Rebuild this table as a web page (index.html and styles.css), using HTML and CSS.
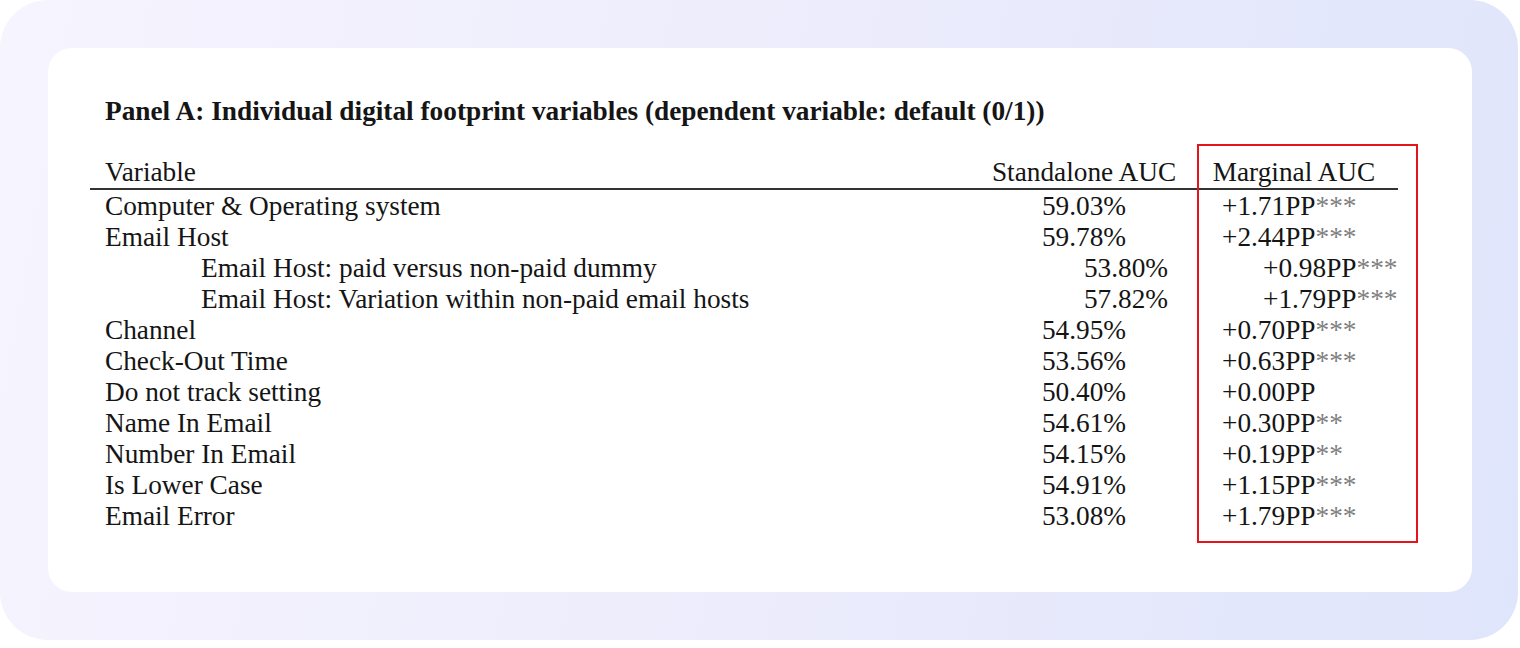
FILE: index.html
```html
<!DOCTYPE html>
<html>
<head>
<meta charset="utf-8">
<link rel="stylesheet" href="styles.css">
</head>
<body>
<div class="outer">
  <div class="card">
    <div class="title">Panel A: Individual digital footprint variables (dependent variable: default (0/1))</div>
    <div class="table">
      <div class="row head">
        <div class="c1">Variable</div>
        <div class="c2">Standalone AUC</div>
        <div class="c3 center">Marginal AUC</div>
      </div>
      <div class="row first">
        <div class="c1">Computer &amp; Operating system</div>
        <div class="c2">59.03%</div>
        <div class="c3">+1.71PP<span class="st">***</span></div>
      </div>
      <div class="row">
        <div class="c1">Email Host</div>
        <div class="c2">59.78%</div>
        <div class="c3">+2.44PP<span class="st">***</span></div>
      </div>
      <div class="row sub">
        <div class="c1">Email Host: paid versus non-paid dummy</div>
        <div class="c2">53.80%</div>
        <div class="c3">+0.98PP<span class="st">***</span></div>
      </div>
      <div class="row sub">
        <div class="c1">Email Host: Variation within non-paid email hosts</div>
        <div class="c2">57.82%</div>
        <div class="c3">+1.79PP<span class="st">***</span></div>
      </div>
      <div class="row">
        <div class="c1">Channel</div>
        <div class="c2">54.95%</div>
        <div class="c3">+0.70PP<span class="st">***</span></div>
      </div>
      <div class="row">
        <div class="c1">Check-Out Time</div>
        <div class="c2">53.56%</div>
        <div class="c3">+0.63PP<span class="st">***</span></div>
      </div>
      <div class="row">
        <div class="c1">Do not track setting</div>
        <div class="c2">50.40%</div>
        <div class="c3">+0.00PP</div>
      </div>
      <div class="row">
        <div class="c1">Name In Email</div>
        <div class="c2">54.61%</div>
        <div class="c3">+0.30PP<span class="st">**</span></div>
      </div>
      <div class="row">
        <div class="c1">Number In Email</div>
        <div class="c2">54.15%</div>
        <div class="c3">+0.19PP<span class="st">**</span></div>
      </div>
      <div class="row">
        <div class="c1">Is Lower Case</div>
        <div class="c2">54.91%</div>
        <div class="c3">+1.15PP<span class="st">***</span></div>
      </div>
      <div class="row">
        <div class="c1">Email Error</div>
        <div class="c2">53.08%</div>
        <div class="c3">+1.79PP<span class="st">***</span></div>
      </div>
      <div class="highlight"></div>
    </div>
  </div>
</div>
</body>
</html>
```
FILE: styles.css
```css
html, body {
  margin: 0;
  padding: 0;
  background: #ffffff;
}
.outer {
  width: 1518px;
  height: 640px;
  box-sizing: border-box;
  padding: 48px 46px 48px 48px;
  border-radius: 48px;
  background: linear-gradient(100deg, #f6f4fe 0%, #eeedfc 45%, #dfe5fb 100%);
}
.card {
  height: 544px;
  background: #ffffff;
  border-radius: 24px;
  padding: 0 0 0 42px;
  box-sizing: border-box;
  font-family: "Liberation Serif", "Times New Roman", serif;
  color: #151515;
}
.title {
  font-weight: bold;
  font-size: 27.3px;
  line-height: 28px;
  padding: 49px 0 0 15px;
  height: 28px;
  white-space: nowrap;
}
.table {
  position: relative;
  width: 1308px;
  margin-top: 27px;
  font-size: 27.3px;
}
.row {
  display: grid;
  grid-template-columns: 873px 212px 208px;
  padding-left: 15px;
  height: 31px;
  line-height: 31px;
  white-space: nowrap;
}
.row.head {
  height: 31px;
  padding-top: 5px;
  border-bottom: 2px solid #333;
}
.row.first {
  margin-top: 1px;
}
.c2 {
  text-align: center;
}
.c3 {
  padding-left: 32px;
}
.c3.center {
  padding-left: 0;
  text-align: center;
}
.sub .c1 {
  padding-left: 96px;
}
.sub .c2 {
  padding-left: 84px;
}
.sub .c3 {
  padding-left: 73px;
}
.st {
  color: #808080;
}
.highlight {
  position: absolute;
  left: 1107px;
  top: -8px;
  width: 217px;
  height: 395px;
  border: 2px solid #e3141a;
}
```
